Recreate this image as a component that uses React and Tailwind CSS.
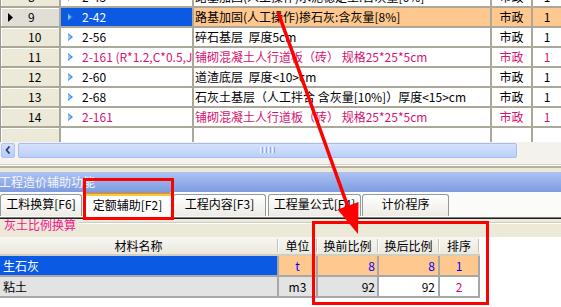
import React from "react";

const rows = [
  { n: 8, code: "2-43", desc: "路基加固(人工操作)水泥稳定土:含灰量[6%]" },
  { n: 9, code: "2-42", desc: "路基加固(人工操作)掺石灰:含灰量[8%]", sel: true },
  { n: 10, code: "2-56", desc: "碎石基层\u00a0\u00a0厚度5cm" },
  { n: 11, code: "2-161 (R*1.2,C*0.5,J", desc: "铺砌混凝土人行道板（砖）\u00a0规格25*25*5cm", pink: true },
  { n: 12, code: "2-60", desc: "道渣底层\u00a0\u00a0厚度<10>cm" },
  { n: 13, code: "2-68", desc: "石灰土基层（人工拌合\u00a0含灰量[10%]）厚度<15>cm" },
  { n: 14, code: "2-161", desc: "铺砌混凝土人行道板（砖）\u00a0规格25*25*5cm", pink: true },
  { n: null },
];

function Tri({ sel }) {
  return (
    <svg width="5" height="8" viewBox="0 0 5 8" className="shrink-0">
      <path d="M0 0 L5 4 L0 8 Z" fill={sel ? "#2f7be0" : "#3d8fe6"} />
      <path d="M0 1 L3 4 L0 7 Z" fill={sel ? "#86bdf5" : "#9cc9f5"} />
    </svg>
  );
}

function GridRow({ r }) {
  const color = r.pink ? "text-[#d6136f]" : "text-black";
  const hl = r.sel ? "bg-[#ffc88e]" : "bg-white";
  return (
    <div className={`flex h-[20px] leading-[16px] ${color}`}>
      <div
        className={`flex w-[60px] shrink-0 items-center border-b-2 border-r-2 border-[#aca899] text-black shadow-[inset_1px_1px_0_#fff] ${
          r.sel ? "bg-[#e1dfd5]" : "bg-[#ece9d8]"
        }`}
      >
        {r.sel ? (
          <>
            <svg width="5" height="9" viewBox="0 0 5 9" className="ml-[7px] shrink-0">
              <path d="M0 0 L5 4.5 L0 9 Z" fill="#000" />
            </svg>
            <span className="ml-[15px]">{r.n}</span>
          </>
        ) : (
          <span className="ml-[27px]">{r.n}</span>
        )}
      </div>
      <div
        className={`flex w-[133px] shrink-0 items-center overflow-hidden whitespace-nowrap border-b-2 border-r-2 border-[#aca899] pl-[7px] ${
          r.sel ? "bg-[#0b5ae4] text-white" : "bg-white"
        }`}
      >
        {r.code && <Tri sel={r.sel} />}
        <span className="ml-[9px] overflow-hidden">{r.code}</span>
      </div>
      <div className={`flex w-[298px] shrink-0 items-center overflow-hidden whitespace-nowrap border-b-2 border-r-2 border-[#aca899] pl-[1px] ${hl}`}>
        {r.desc}
      </div>
      <div className={`flex w-[41px] shrink-0 items-center justify-center border-b-2 border-r-2 border-[#aca899] ${hl}`}>
        {r.n ? "市政" : ""}
      </div>
      <div className={`flex flex-1 items-center justify-center border-b-2 border-[#aca899] ${hl}`}>
        {r.n ? "1" : ""}
      </div>
    </div>
  );
}

function HScroll() {
  return (
    <div className="flex h-[16px] items-center bg-[#f3f2ec]">
      <div className="ml-[1px] flex h-[15px] w-[14px] items-center justify-center rounded-[2px] border border-[#b0c4f3] bg-gradient-to-b from-[#d3e0fd] to-[#b7cbf8]">
        <svg width="6" height="8" viewBox="0 0 6 8">
          <path d="M4.5 0.5 L1.5 4 L4.5 7.5" fill="none" stroke="#30406a" strokeWidth="1.8" />
        </svg>
      </div>
      <div className="ml-[3px] flex h-[15px] w-[499px] items-center justify-center rounded-[2px] border border-[#a7bdf2] bg-gradient-to-b from-[#d5e1fd] to-[#bccffa]">
        <div className="flex gap-[1px]">
          <span className="h-[6px] w-[1px] bg-[#eef3ff]" />
          <span className="h-[6px] w-[1px] bg-[#8ea8e6]" />
          <span className="h-[6px] w-[1px] bg-[#eef3ff]" />
          <span className="h-[6px] w-[1px] bg-[#8ea8e6]" />
          <span className="h-[6px] w-[1px] bg-[#eef3ff]" />
          <span className="h-[6px] w-[1px] bg-[#8ea8e6]" />
          <span className="h-[6px] w-[1px] bg-[#eef3ff]" />
          <span className="h-[6px] w-[1px] bg-[#8ea8e6]" />
        </div>
      </div>
    </div>
  );
}

function Tab({ label, w, sel, ml }) {
  if (sel) {
    return (
      <div className={`flex h-[25px] ${w} ${ml} shrink-0 flex-col rounded-t-[3px] border border-b-0 border-[#919b9c] bg-white`}>
        <div className="h-[3px] rounded-t-[2px] border-t border-[#e68b2c] bg-[#ffc73c]" />
        <div className="flex flex-1 items-center justify-center pb-[4px]">{label}</div>
      </div>
    );
  }
  return (
    <div
      className={`mb-[1px] flex h-[22px] ${w} ${ml} shrink-0 items-center justify-center rounded-t-[3px] border border-b-0 border-[#919b9c] bg-gradient-to-b from-white to-[#ecebe5] pb-[3px]`}
    >
      {label}
    </div>
  );
}

function HeadCell({ w, label }) {
  return (
    <div className={`flex ${w} shrink-0 items-center`}>
      <div className="flex-1 text-center">{label}</div>
      <span className="h-[13px] w-[2px] shrink-0 border-l border-[#c5c2b2] bg-white" />
    </div>
  );
}

function Cell({ w, bg, children, align = "justify-center", pad = "", color = "text-black" }) {
  return (
    <div className={`flex ${w} shrink-0 items-center border-b-2 border-r-2 border-[#a7a7a7] ${bg} ${align} ${pad} ${color}`}>
      {children}
    </div>
  );
}

export default function App() {
  return (
    <div className="relative h-[307px] w-[561px] overflow-hidden bg-white font-['Noto_Sans_CJK_SC',sans-serif] text-[12px] leading-none text-black">
      {/* upper grid */}
      <div className="h-[142px] overflow-hidden border-l border-[#9b9b93]">
        <div className="-mt-[12px]">
          {rows.map((r, i) => (
            <GridRow key={i} r={r} />
          ))}
        </div>
      </div>

      <HScroll />

      {/* splitter */}
      <div className="h-[6px] bg-[#f4f3ee]" />
      <div className="h-px bg-[#d4d0c8]" />
      <div className="h-px bg-white" />
      <div className="h-[2px] bg-[#b5b19f]" />
      <div className="h-[4px] bg-[#ece9d8]" />

      {/* caption */}
      <div className="flex h-[20px] items-center bg-gradient-to-b from-[#adc2f2] to-[#7d9ce0] leading-[16px] text-[#f4f6fc]">
        <span className="-ml-[1px]">工程造价辅助功能</span>
      </div>

      {/* tabs */}
      <div className="flex h-[25px] items-end bg-[#fbfbf9] leading-[16px]">
        <Tab label="工料换算[F6]" w="w-[82px]" ml="ml-0" />
        <Tab label="定额辅助[F2]" w="w-[89px]" ml="ml-[1px]" sel />
        <Tab label="工程内容[F3]" w="w-[93px]" ml="ml-[1px]" />
        <Tab label="工程量公式[F4]" w="w-[93px]" ml="ml-[2px]" />
        <Tab label="计价程序" w="w-[87px]" ml="ml-[1px]" />
      </div>
      <div className="h-px bg-[#7d7d7d]" />
      <div className="h-px bg-[#1e1e1e]" />

      {/* group caption */}
      <div className="flex h-[18px] items-start bg-[#ece9d8] leading-[12px]">
        <span className="ml-[4px] text-[#f0168c]">灰土比例换算</span>
        <div className="ml-[3px] mt-[3px] h-[2px] flex-1 border-t border-[#d0ccbb] bg-white" />
      </div>

      {/* material table */}
      <div className="flex h-[19px] w-[480px] items-center border-b-2 border-[#d2cebe] bg-gradient-to-b from-[#f7f6f1] to-[#ebe9df] leading-[14px]">
        <HeadCell w="w-[279px]" label="材料名称" />
        <HeadCell w="w-[39px]" label="单位" />
        <HeadCell w="w-[61px]" label="换前比例" />
        <HeadCell w="w-[61px]" label="换后比例" />
        <HeadCell w="w-[40px]" label="排序" />
      </div>
      <div className="flex h-[21px] leading-[14px]">
        <Cell w="w-[279px]" bg="bg-[#0b5ae4]" align="justify-start" pad="pl-[3px]" color="text-white">生石灰</Cell>
        <Cell w="w-[39px]" bg="bg-[#ffc88e]" color="text-[#0000ff]">t</Cell>
        <Cell w="w-[61px]" bg="bg-[#ffc88e]" align="justify-end" pad="pr-[2px]" color="text-[#0000ff]">8</Cell>
        <Cell w="w-[61px]" bg="bg-[#ffc88e]" align="justify-end" pad="pr-[3px]" color="text-[#0000ff]">8</Cell>
        <Cell w="w-[40px]" bg="bg-[#ffc88e]" color="text-[#0000ff]">1</Cell>
      </div>
      <div className="flex h-[21px] leading-[14px]">
        <Cell w="w-[279px]" bg="bg-[#e3e3e3]" align="justify-start" pad="pl-[3px]">粘土</Cell>
        <Cell w="w-[39px]" bg="bg-[#e3e3e3]">m3</Cell>
        <Cell w="w-[61px]" bg="bg-[#e3e3e3]" align="justify-end" pad="pr-[2px]">92</Cell>
        <Cell w="w-[61px]" bg="bg-white" align="justify-end" pad="pr-[3px]">92</Cell>
        <Cell w="w-[40px]" bg="bg-white" color="text-[#e0007a]">2</Cell>
      </div>

      {/* annotations */}
      <div className="pointer-events-none absolute left-[83px] top-[178px] h-[42px] w-[91px] border-[3px] border-[#ff0000]" />
      <div className="pointer-events-none absolute left-[312px] top-[221px] h-[84px] w-[177px] border-[3px] border-[#ff0000]" />
      <svg className="pointer-events-none absolute left-0 top-0" width="561" height="307" viewBox="0 0 561 307">
        <line x1="278" y1="12" x2="349" y2="210" stroke="#ff0000" strokeWidth="3.5" />
        <polygon points="358,234 337.5,209.5 358.5,202" fill="#ff0000" />
      </svg>
    </div>
  );
}
